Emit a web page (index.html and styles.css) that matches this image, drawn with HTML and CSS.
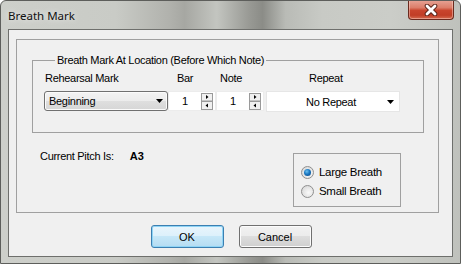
FILE: index.html
```html
<!DOCTYPE html>
<html>
<head>
<meta charset="utf-8">
<link rel="stylesheet" href="styles.css">
</head>
<body>
<div class="window">
  <div class="titlebar">
    <span class="title">Breath Mark</span>
    <div class="close">
      <svg width="16" height="12" viewBox="0 0 16 12">
        <path d="M4 2L12 10M12 2L4 10" stroke="#5a2418" stroke-width="4.6" stroke-linecap="round"/>
        <path d="M4 2L12 10M12 2L4 10" stroke="#fff" stroke-width="2.8" stroke-linecap="round"/>
      </svg>
    </div>
  </div>
  <div class="client">
    <div class="panel">
      <fieldset class="group">
        <legend>Breath Mark At Location (Before Which Note)</legend>
        <div class="labels">
          <span class="lbl lbl-reh">Rehearsal Mark</span>
          <span class="lbl lbl-bar">Bar</span>
          <span class="lbl lbl-note">Note</span>
          <span class="lbl lbl-rep">Repeat</span>
        </div>
        <div class="controls">
          <div class="combo">
            <span class="combo-text">Beginning</span>
            <svg class="arrow" width="7" height="4" viewBox="0 0 7 4"><path d="M0 0H7L3.5 4Z" fill="#000"/></svg>
          </div>
          <div class="spin">
            <span class="val">1</span>
            <svg class="spinbtn" width="12" height="17" viewBox="0 0 12 17">
              <rect x="0.5" y="0.5" width="11" height="7.5" fill="#f0f0f0" stroke="#9a9a9a"/>
              <rect x="0.5" y="8.5" width="11" height="8" fill="#f0f0f0" stroke="#9a9a9a"/>
              <path d="M5 2V6L7.5 4Z" fill="#000"/>
              <path d="M7 10.5V14.5L4.5 12.5Z" fill="#000"/>
            </svg>
          </div>
          <div class="spin">
            <span class="val">1</span>
            <svg class="spinbtn" width="12" height="17" viewBox="0 0 12 17">
              <rect x="0.5" y="0.5" width="11" height="7.5" fill="#f0f0f0" stroke="#9a9a9a"/>
              <rect x="0.5" y="8.5" width="11" height="8" fill="#f0f0f0" stroke="#9a9a9a"/>
              <path d="M5 2V6L7.5 4Z" fill="#000"/>
              <path d="M7 10.5V14.5L4.5 12.5Z" fill="#000"/>
            </svg>
          </div>
          <div class="repeat">
            <span class="repeat-text">No Repeat</span>
            <svg class="arrow" width="7" height="4" viewBox="0 0 7 4"><path d="M0 0H7L3.5 4Z" fill="#000"/></svg>
          </div>
        </div>
      </fieldset>
      <div class="lower">
        <div class="pitch"><span>Current Pitch Is:</span><b class="pitch-val">A3</b></div>
        <div class="radios">
          <label class="radio"><span class="dot checked"></span><span>Large Breath</span></label>
          <label class="radio"><span class="dot"></span><span>Small Breath</span></label>
        </div>
      </div>
    </div>
    <div class="buttons">
      <div class="btn btn-default">OK</div>
      <div class="btn">Cancel</div>
    </div>
  </div>
</div>
</body>
</html>
```

FILE: styles.css
```css
html, body {
  margin: 0;
  padding: 0;
  background: #ffffff;
}

.window {
  box-sizing: border-box;
  width: 461px;
  height: 264px;
  border: 1px solid #5d5e5b;
  border-radius: 6px 6px 0 0;
  background: linear-gradient(90deg, #cdcfca 0%, #c9cbc6 25%, #b0b1ac 37%, #a6a7a2 40%, #c3c5c0 47%, #999a95 54%, #8b8c87 57%, #b9bbb6 62%, #c8cac5 70%, #cbcdc8 85%, #bfc1bc 100%);
  display: flex;
  flex-direction: column;
  overflow: hidden;
  font-family: "Liberation Sans", Arial, sans-serif;
  font-size: 11px;
  letter-spacing: -0.3px;
  color: #000;
}

.titlebar {
  height: 28px;
  display: flex;
  justify-content: space-between;
  align-items: flex-start;
  flex: none;
}

.title {
  font-family: "Noto Sans", "Open Sans", sans-serif;
  font-size: 11.5px;
  letter-spacing: 0;
  padding-left: 7px;
  line-height: 14px;
  margin-top: 8px;
  color: #111;
  text-shadow: 0 0 6px rgba(255,255,255,0.8);
}

.close {
  box-sizing: border-box;
  width: 46px;
  height: 20px;
  margin-right: 6px;
  margin-top: -1px;
  border: 1px solid #6a2a1e;
  border-top: none;
  border-radius: 0 0 4px 4px;
  background: linear-gradient(#e7a597 0%, #dc7e6a 40%, #c9452d 55%, #c13d26 80%, #d56c50 100%);
  box-shadow: inset 0 0 0 1px rgba(255,220,210,0.45);
  display: flex;
  align-items: center;
  justify-content: center;
}

.client {
  box-sizing: border-box;
  margin: 0 7px;
  height: 228px;
  background: #f0f0f0;
  border: 1px solid #6e6f6c;
  display: flex;
  flex-direction: column;
  flex: none;
}

.panel {
  box-sizing: border-box;
  margin: 9px 13px 0 7px;
  height: 174px;
  border: 1px solid #a0a0a0;
  display: flex;
  flex-direction: column;
}

.group {
  box-sizing: border-box;
  margin: 14px 0 0 15px;
  width: 392px;
  padding: 5px 0 0 11px;
  height: 79px;
  border: 1px solid #a0a0a0;
  min-width: 0;
}

.group legend {
  padding: 0 2px;
  margin-left: 11px;
  line-height: 13px;
}

.labels {
  display: flex;
  height: 13px;
  line-height: 13px;
}

.lbl-reh { width: 123px; padding-left: 1px; }
.lbl-bar { width: 39px; padding-left: 9px; }
.lbl-note { width: 46px; padding-left: 4px; }
.lbl-rep { padding-left: 43px; }

.controls {
  display: flex;
  margin-top: 6px;
  height: 20px;
}

.combo {
  box-sizing: border-box;
  width: 124px;
  height: 20px;
  border: 1px solid #707070;
  border-radius: 3px;
  background: linear-gradient(#f3f3f3 0%, #ececec 50%, #dfdfdf 50%, #d6d6d6 100%);
  box-shadow: inset 0 0 0 1px #fbfbfb;
  display: flex;
  align-items: center;
  padding: 0 4px 0 4px;
}

.combo-text { flex: 1; }

.arrow { flex: none; }

.spin {
  box-sizing: border-box;
  width: 48px;
  height: 20px;
  background: #fff;
  border: 1px solid #ececec;
  display: flex;
  align-items: center;
  padding-left: 13px;
}

.spin .val { flex: 1; }
.spin .spinbtn { margin-right: 2px; }

.repeat {
  box-sizing: border-box;
  width: 134px;
  height: 21px;
  margin-left: 2px;
  background: #fff;
  border: 1px solid #e6e6e6;
  display: flex;
  align-items: center;
  padding: 0 5px 0 0;
}

.repeat-text {
  flex: 1;
  text-align: center;
  padding-left: 8px;
}

.lower {
  display: flex;
  align-items: flex-start;
  margin-top: 17px;
}

.pitch {
  margin-left: 23px;
  line-height: 13px;
  display: flex;
}

.pitch-val {
  margin-left: 16px;
  font-weight: bold;
  letter-spacing: 0;
}

.radios {
  box-sizing: border-box;
  margin-left: auto;
  margin-right: 37px;
  margin-top: 3px;
  width: 108px;
  height: 54px;
  border: 1px solid #a0a0a0;
  display: flex;
  flex-direction: column;
  padding: 12px 0 0 7px;
  gap: 6px;
}

.radio {
  display: flex;
  align-items: center;
  height: 13px;
  line-height: 13px;
  font-size: 11.5px;
}

.dot {
  box-sizing: border-box;
  width: 13px;
  height: 13px;
  border-radius: 50%;
  border: 1px solid #8f8f8f;
  background: radial-gradient(circle at 60% 60%, #fafafa 0%, #e2e2e2 60%, #cfcfcf 100%);
  margin-right: 5px;
  display: flex;
  align-items: center;
  justify-content: center;
  flex: none;
}

.dot.checked::after {
  content: "";
  width: 7px;
  height: 7px;
  border-radius: 50%;
  background: radial-gradient(circle at 40% 35%, #6cc0f0 0%, #1a78c2 45%, #0a4280 100%);
}

.buttons {
  display: flex;
  justify-content: center;
  gap: 15px;
  margin-top: 12px;
  padding-left: 1px;
}

.btn {
  box-sizing: border-box;
  width: 73px;
  height: 23px;
  border: 1px solid #707070;
  border-radius: 3px;
  background: linear-gradient(#f2f2f2 0%, #ebebeb 50%, #dddddd 50%, #cfcfcf 100%);
  box-shadow: inset 0 0 0 1px #fcfcfc;
  display: flex;
  align-items: center;
  justify-content: center;
  letter-spacing: 0;
}

.btn-default {
  border-color: #3c7fb1;
  background: linear-gradient(#e9f5fc 0%, #dcf0fb 50%, #c6e7f8 50%, #b5dcf2 100%);
  box-shadow: inset 0 0 0 1px #8fd4f5;
}
```
